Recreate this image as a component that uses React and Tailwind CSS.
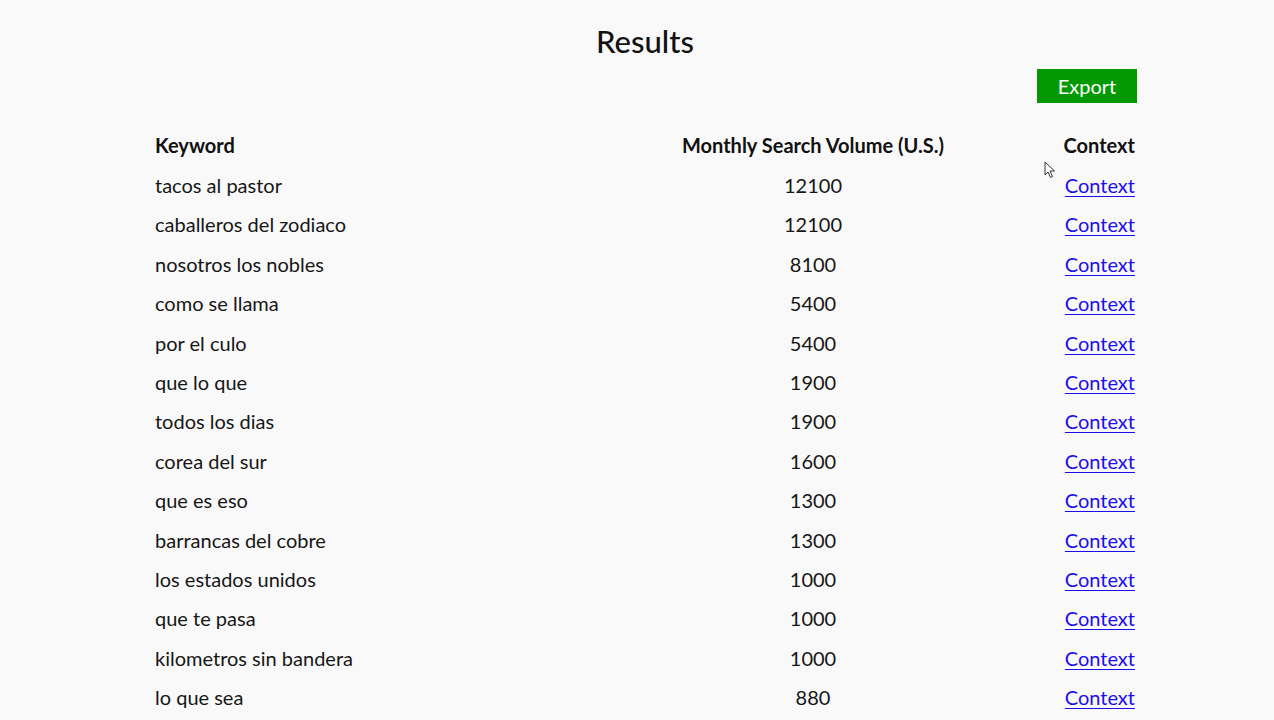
import React from "react";

const rows = [
  ["tacos al pastor", 12100],
  ["caballeros del zodiaco", 12100],
  ["nosotros los nobles", 8100],
  ["como se llama", 5400],
  ["por el culo", 5400],
  ["que lo que", 1900],
  ["todos los dias", 1900],
  ["corea del sur", 1600],
  ["que es eso", 1300],
  ["barrancas del cobre", 1300],
  ["los estados unidos", 1000],
  ["que te pasa", 1000],
  ["kilometros sin bandera", 1000],
  ["lo que sea", 880],
];

export default function App() {
  return (
    <div className="relative min-h-screen bg-[#faf9fa] text-[#111] font-['Lato','Noto_Sans',sans-serif] overflow-hidden">
      <h1 className="pt-[21px] text-center text-[31px] leading-[40px] font-medium pl-[16px]">Results</h1>
      <div className="ml-[155px] w-[982px]">
        <div className="flex justify-end mt-[8px]">
          <button className="w-[100px] h-[34px] bg-[#009a00] text-white text-[20px] leading-[34px]">Export</button>
        </div>
        <div className="mt-[26px] grid grid-cols-[505px_306px_1fr] text-[20px]">
          <div className="h-[40px] leading-[32px] font-bold">Keyword</div>
          <div className="h-[40px] leading-[32px] font-bold text-center">Monthly Search Volume (U.S.)</div>
          <div className="h-[40px] leading-[32px] font-bold text-right pr-[2px]">Context</div>
          {rows.map(([k, v], i) => (
            <React.Fragment key={i}>
              <div className="h-[39.4px] leading-[32px] text-[#161616]">{k}</div>
              <div className="h-[39.4px] leading-[32px] text-center text-[#161616]">{v}</div>
              <div className="h-[39.4px] leading-[32px] text-right pr-[2px]">
                <a href="#" className="text-[#1a0dee] underline underline-offset-[3px] decoration-1">Context</a>
              </div>
            </React.Fragment>
          ))}
        </div>
      </div>
      <svg className="absolute left-[1044px] top-[161px]" width="12" height="18" viewBox="0 0 12 18">
        <path d="M1 1 L1 14 L4 11 L6.5 16.5 L8.5 15.5 L6 10 L10.5 10 Z" fill="#fff" stroke="#333" strokeWidth="1" />
      </svg>
    </div>
  );
}
